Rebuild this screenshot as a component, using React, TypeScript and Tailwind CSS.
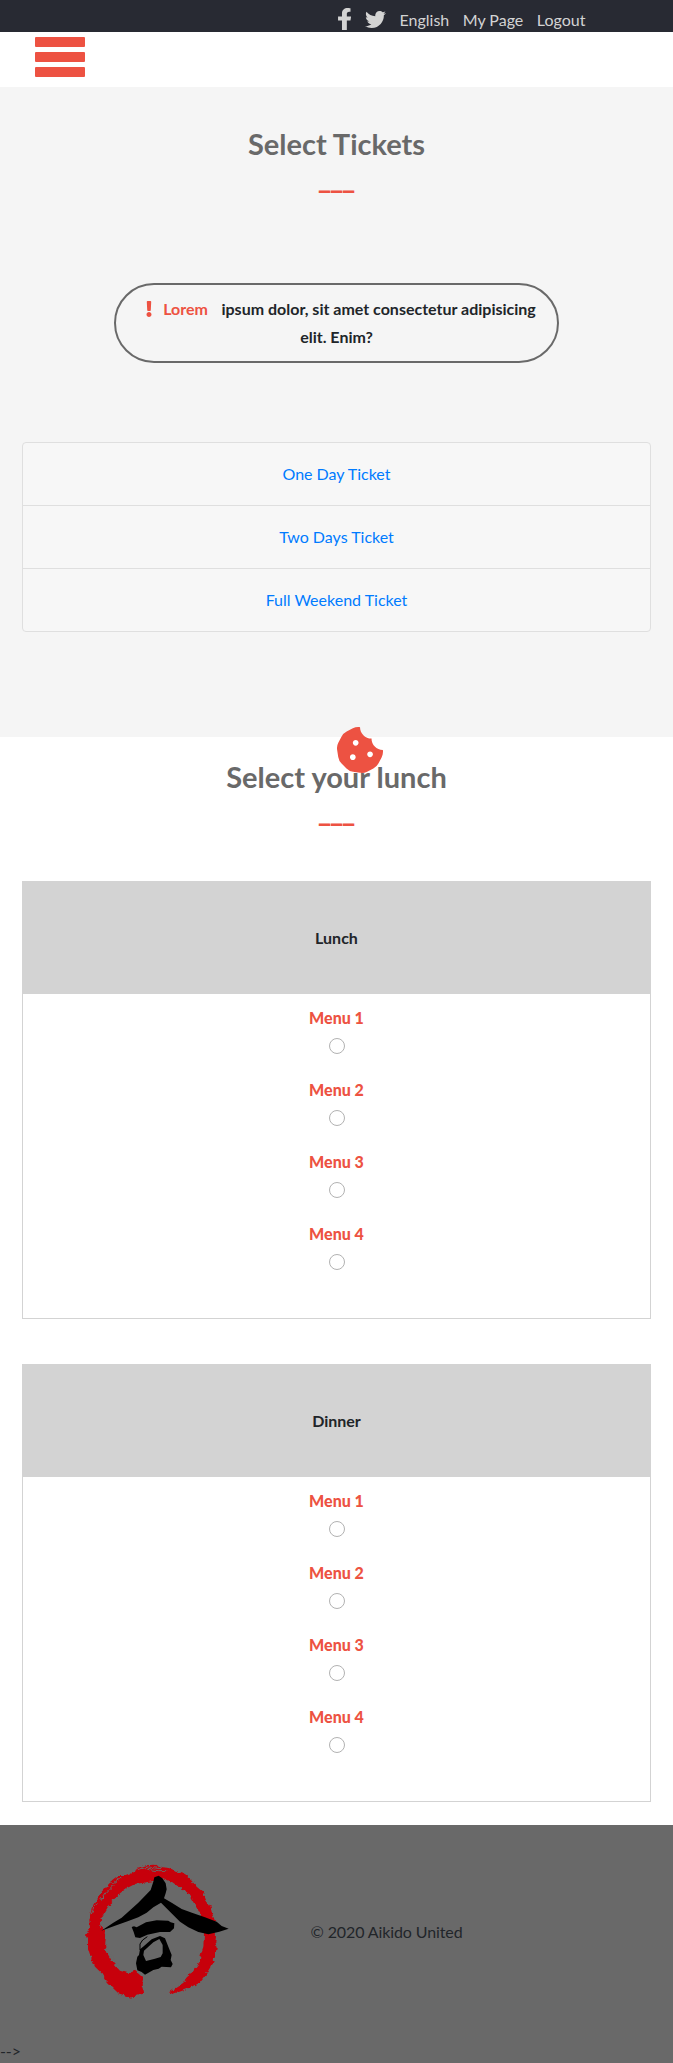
import React from "react";
import { FaTwitter, FaExclamation, FaCookieBite } from "react-icons/fa";

const tickets = ["One Day Ticket", "Two Days Ticket", "Full Weekend Ticket"];
const menus = ["Menu 1", "Menu 2", "Menu 3", "Menu 4"];

function FacebookIcon() {
  return (
    <svg className="mt-2 h-[22px] w-[12.5px]" viewBox="22 0 258 512" preserveAspectRatio="none" fill="currentColor" aria-hidden="true">
      <path d="M279.14 288l14.22-92.66h-88.91v-60.13c0-25.35 12.42-50.06 52.24-50.06H280V6.26S260.43 0 225.36 0c-73.22 0-121.08 44.38-121.08 124.72v70.62H22.89V288h81.39v224h100.17V288z" />
    </svg>
  );
}

function Heading({ children }: { children: React.ReactNode }) {
  return (
    <h2 className="text-center text-[29px] leading-[35px] font-bold text-[#696969]">
      {children}
      <span className="-mt-px block pr-[1.5px] text-[29px] leading-[35px] font-black tracking-[-1.6px] text-[#ed5242]">___</span>
    </h2>
  );
}

function MealCard({ title }: { title: string }) {
  return (
    <div className="h-[438px] border border-[#d3d3d3] text-center">
      <div className="flex h-28 items-center justify-center bg-[#d3d3d3] font-bold">{title}</div>
      <div className="pt-3">
        {menus.map((menu) => (
          <label key={menu} className="flex h-18 flex-col items-center font-black text-[#ed5242]">
            <span className="leading-6">{menu}</span>
            <input
              type="radio"
              name={title}
              className="mt-2 ml-px size-4 appearance-none rounded-full border border-[#b2b2b2] bg-white"
            />
          </label>
        ))}
      </div>
    </div>
  );
}

function Logo() {
  return (
    <svg className="h-[180px] w-[200px]" viewBox="0 0 600 540" aria-hidden="true">
      <defs>
        <filter id="brush" x="0" y="0" width="600" height="540" filterUnits="userSpaceOnUse" colorInterpolationFilters="sRGB">
          <feTurbulence type="fractalNoise" baseFrequency="0.08" numOctaves="2" seed="4" />
          <feDisplacementMap in="SourceGraphic" scale="14" xChannelSelector="R" yChannelSelector="G" />
        </filter>
      </defs>
      <g filter="url(#brush)">
        <path
          fill="#c7000b"
          d="M230 85L255 76 285 74 305 82 330 84 345 93 372 102 395 122 410 140 428 155 438 180 452 200 458 225 466 245 468 290 466 305 470 325 465 350 455 375 440 400 420 425 395 440 365 453 338 462 327 457 345 445 368 430 382 418 385 403 400 393 418 370 422 345 430 320 432 280 430 250 420 220 408 200 395 178 385 160 360 143 335 125 310 115 285 122 250 128 225 132 200 145 180 160 155 185 140 210 125 235 120 255 133 270 137 300 135 320 145 345 160 370 180 392 205 400 225 392 240 405 250 415 245 435 252 458 230 465 213 476 200 468 175 460 155 440 140 425 125 400 105 380 92 350 84 325 84 300 78 285 90 265 88 240 95 205 110 180 125 155 150 128 180 105 200 105 225 95Z"
        />
        <path
          stroke="#696969"
          strokeWidth="3"
          fill="none"
          d="M228 90L265 81 300 86M262 88L295 92 322 92M122 180L138 158 160 135M94 222L103 200 112 190M160 128L182 113M142 322L152 350 172 380M152 338L166 364 182 384"
        />
      </g>
      <path d="M296 107L307 115 317 130 320 148 317 160 312 175 335 188 365 207 400 220 435 232 470 245 485 258 506 266 478 275 445 283 415 276 385 262 360 245 330 215 303 188 280 202 260 218 235 232 205 243 165 257 124 272 160 248 185 233 205 215 235 188 272 150 280 125 283 112Z" />
      <path d="M215 261L222 259 230 262 258 247 290 241 325 242 332 247 343 250 342 265 330 276 300 276 262 284 240 294 226 292 221 276Z" />
      <path
        fillRule="evenodd"
        d="M300 288L315 295 325 320 335 345 332 360 338 372 333 382 305 380 296 386 280 390 255 404 245 396 232 391 228 370 232 350 237 345 240 328 252 318 275 298ZM298 297L280 307 252 332 250 345 258 363 285 356 302 351 308 340 308 315Z"
      />
      <path stroke="#000" strokeWidth="3" fill="none" d="M240 330L240 312 248 300 262 290" />
    </svg>
  );
}

export default function App() {
  return (
    <div className="h-[2063px] w-full overflow-hidden bg-white font-['Lato',sans-serif] text-base text-[#212529]">
      <nav className="flex h-8 items-start bg-[#282a33] pl-[338px] text-[#d3d3d3]">
        <FacebookIcon />
        <FaTwitter className="mt-[8.5px] ml-[14.5px] size-[21px]" />
        <div className="mt-2 ml-[13.5px] flex gap-[13.5px] leading-6">
          <a>English</a>
          <a>My Page</a>
          <a>Logout</a>
        </div>
      </nav>
      <header className="h-[55px] pt-[5px] pl-[35px]">
        <button className="flex flex-col gap-[5px]" aria-label="Menu">
          <span className="h-2.5 w-[50px] rounded-[1px] bg-[#ed5242]" />
          <span className="h-2.5 w-[50px] rounded-[1px] bg-[#ed5242]" />
          <span className="h-2.5 w-[50px] rounded-[1px] bg-[#ed5242]" />
        </button>
      </header>
      <section className="h-[650px] bg-[#f5f5f5] px-[22px] pt-[39px]">
        <Heading>Select Tickets</Heading>
        <div className="mx-auto mt-[88px] h-20 w-[445px] rounded-[40px] border-2 border-[#696969] pt-2.5 text-center leading-7 font-bold">
          <div className="flex items-center justify-center pl-[4px]">
            <FaExclamation className="mr-[6px] size-4 text-[#ed5242]" />
            <span className="mr-[13.5px] text-[#ed5242]">Lorem</span>
            <span>ipsum dolor, sit amet consectetur adipisicing</span>
          </div>
          <div>elit. Enim?</div>
        </div>
        <div className="mt-[79px] divide-y divide-[#dfdfdf] rounded border border-[#dfdfdf] bg-[#f7f7f7] text-center text-[#007bff]">
          {tickets.map((ticket) => (
            <div key={ticket} className="flex h-[63px] items-center justify-center last:h-[62px]">
              <a>{ticket}</a>
            </div>
          ))}
        </div>
      </section>
      <section className="relative h-[1088px] px-[22px] pt-[22px]">
        <FaCookieBite className="absolute top-[-10.5px] left-[336.7px] size-[46px] text-[#ed5242]" />
        <div className="relative">
          <Heading>Select your lunch</Heading>
        </div>
        <div className="mt-[53px] flex flex-col gap-[45px]">
          <MealCard title="Lunch" />
          <MealCard title="Dinner" />
        </div>
      </section>
      <footer className="flex h-[238px] flex-col bg-[#696969] tracking-[-0.11px]">
        <div className="flex pt-[15px] pl-[60px]">
          <Logo />
          <p className="mt-20 ml-[50.5px] leading-6">© 2020 Aikido United</p>
        </div>
        <p className="mt-[19px] leading-6">--&gt;</p>
      </footer>
    </div>
  );
}
